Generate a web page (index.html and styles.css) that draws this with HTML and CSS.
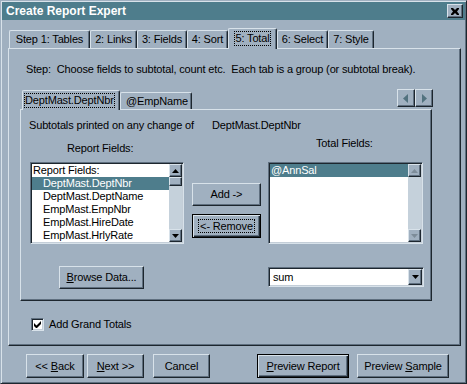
FILE: index.html
```html
<!DOCTYPE html>
<html>
<head>
<meta charset="utf-8">
<link rel="stylesheet" href="styles.css">
</head>
<body>
<div class="window">
  <div class="titlebar">
    <span class="title">Create Report Expert</span>
    <span class="close raised"><svg width="8" height="7" viewBox="0 0 8 7"><path d="M0 0h2l2 2 2-2h2v1l-2 2.5 2 2.5v1h-2l-2-2-2 2h-2v-1l2-2.5-2-2.5z" fill="#000"/></svg></span>
  </div>
  <div class="content">
    <div class="tabs">
      <div class="tab t1">Step 1: Tables</div>
      <div class="tab t2">2: Links</div>
      <div class="tab t3">3: Fields</div>
      <div class="tab t4">4: Sort</div>
      <div class="tab t5 active"><span class="focus">5: Total</span></div>
      <div class="tab t6">6: Select</div>
      <div class="tab t7">7: Style</div>
    </div>
    <div class="panel">
      <div class="step">Step:&nbsp; Choose fields to subtotal, count etc.&nbsp; Each tab is a group (or subtotal break).</div>
      <div class="itabs-row">
        <div class="itabs">
          <div class="itab active"><span class="focus">DeptMast.DeptNbr</span></div>
          <div class="itab">@EmpName</div>
        </div>
        <div class="spin">
          <span class="spinbtn raised"><svg width="6" height="9" viewBox="0 0 6 9"><path d="M5 0v9L0 4.5z" fill="#52727f"/></svg></span>
          <span class="spinbtn raised"><svg width="6" height="9" viewBox="0 0 6 9"><path d="M1 0v9l5-4.5z" fill="#52727f"/></svg></span>
        </div>
      </div>
      <div class="ipanel">
        <div class="subline"><span class="subtext">Subtotals printed on any change of</span><span>DeptMast.DeptNbr</span></div>
        <div class="fields">
          <div class="lbl lbl-left">Report Fields:</div>
          <div></div>
          <div class="lbl lbl-right">Total Fields:</div>

          <div class="listbox">
            <div class="items">
              <div class="item">Report Fields:</div>
              <div class="item sub selected">DeptMast.DeptNbr</div>
              <div class="item sub">DeptMast.DeptName</div>
              <div class="item sub">EmpMast.EmpNbr</div>
              <div class="item sub">EmpMast.HireDate</div>
              <div class="item sub">EmpMast.HrlyRate</div>
            </div>
            <div class="scroll">
              <span class="sbtn raised"><svg width="7" height="4" viewBox="0 0 7 4"><path d="M3.5 0L7 4H0z" fill="#000"/></svg></span>
              <span class="thumb raised"></span>
              <span class="track"></span>
              <span class="sbtn raised"><svg width="7" height="4" viewBox="0 0 7 4"><path d="M0 0h7L3.5 4z" fill="#000"/></svg></span>
            </div>
          </div>

          <div class="mid">
            <span class="btn add"><span>Add -&gt;</span></span>
            <span class="btn default remove"><span class="focus">&lt;- Remove</span></span>
          </div>

          <div class="listbox right">
            <div class="items">
              <div class="item selected">@AnnSal</div>
            </div>
            <div class="scroll">
              <span class="sbtn raised"><svg width="7" height="4" viewBox="0 0 7 4"><path d="M3.5 0L7 4H0z" fill="#7d8c99"/></svg></span>
              <span class="track"></span>
              <span class="sbtn raised"><svg width="7" height="4" viewBox="0 0 7 4"><path d="M0 0h7L3.5 4z" fill="#7d8c99"/></svg></span>
            </div>
          </div>

          <div class="browse-cell"><span class="btn browse"><span><u>B</u>rowse Data...</span></span></div>
          <div></div>
          <div class="combo">
            <span class="combo-text">sum</span>
            <span class="sbtn raised combo-btn"><svg width="7" height="4" viewBox="0 0 7 4"><path d="M0 0h7L3.5 4z" fill="#000"/></svg></span>
          </div>
        </div>
      </div>
      <div class="check">
        <span class="box"><svg width="7" height="7" viewBox="0 0 7 7"><path d="M0 2v3l2 2h1l4-4V0L2.5 4.5z" fill="#000"/></svg></span>
        <span>Add Grand Totals</span>
      </div>
    </div>
    <div class="footer">
      <span class="btn fb back"><span>&lt;&lt; <u>B</u>ack</span></span>
      <span class="btn fb next"><span><u>N</u>ext &gt;&gt;</span></span>
      <span class="btn fb cancel"><span>Cancel</span></span>
      <span class="btn fb default preview"><span><u>P</u>review Report</span></span>
      <span class="btn fb sample"><span>Preview <u>S</u>ample</span></span>
    </div>
  </div>
</div>
</body>
</html>
```

FILE: styles.css
```css
:root {
  --face: #a0b0c0;
  --hi: #d8e2ea;
  --sh: #5f6f7f;
  --dk: #1d262e;
  --sel: #4e7d8c;
  --track: #c5d1db;
}

* { box-sizing: border-box; }

html, body {
  margin: 0;
  padding: 0;
  background: var(--face);
}

body {
  font-family: "Liberation Sans", Arial, sans-serif;
  font-size: 11px;
  line-height: 13px;
  letter-spacing: -0.15px;
  color: #000;
}

.window {
  width: 467px;
  height: 384px;
  background: var(--face);
  border: 1px solid;
  border-color: var(--face) var(--dk) var(--dk) var(--face);
  padding: 1px;
  box-shadow: inset 1px 1px 0 var(--hi), inset -1px -1px 0 var(--sh);
}

.titlebar {
  height: 18px;
  background: var(--sel);
  display: flex;
  align-items: center;
  justify-content: space-between;
  padding: 0 2px 0 4px;
}

.title {
  color: #fff;
  font-weight: bold;
  font-size: 12px;
  letter-spacing: 0;
}

.raised {
  border: 1px solid;
  border-color: var(--hi) var(--dk) var(--dk) var(--hi);
  box-shadow: inset -1px -1px 0 var(--sh);
  background: var(--face);
}

.close {
  width: 16px;
  height: 14px;
  display: flex;
  align-items: center;
  justify-content: center;
}

.content {
  padding: 8px 4px 0 6px;
}

.tabs {
  display: flex;
  align-items: flex-end;
  height: 20px;
  padding-left: 1px;
  position: relative;
  z-index: 1;
}

.tab {
  height: 18px;
  display: flex;
  align-items: center;
  justify-content: center;
  border-top: 1px solid var(--hi);
  border-left: 1px solid var(--hi);
  border-right: 1px solid var(--dk);
  box-shadow: inset -1px 0 0 var(--sh);
  border-radius: 2px 2px 0 0;
  background: var(--face);
  white-space: nowrap;
}

.tab.active {
  height: 21px;
  margin-bottom: -1px;
  padding-bottom: 1px;
}

.t1 { width: 81px; }
.t2 { width: 47px; }
.t3 { width: 50px; }
.t4 { width: 41px; }
.t5 { width: 49px; }
.t6 { width: 51px; }
.t7 { width: 46px; }

.focus {
  outline: 1px dotted #000;
  outline-offset: 0;
}

.panel {
  border: 1px solid;
  border-color: var(--hi) var(--dk) var(--dk) var(--hi);
  box-shadow: inset -1px -1px 0 var(--sh);
  padding: 14px 0 14px 11px;
}

.step {
  margin-left: 6px;
  white-space: nowrap;
}

.itabs-row {
  width: 412px;
  display: flex;
  justify-content: space-between;
  align-items: flex-end;
  margin-top: 14px;
  height: 19px;
  position: relative;
  z-index: 1;
}

.itabs {
  display: flex;
  align-items: flex-end;
  padding-left: 2px;
}

.itab {
  height: 17px;
  display: flex;
  align-items: center;
  padding: 0 5px;
  border-top: 1px solid var(--hi);
  border-left: 1px solid var(--hi);
  border-right: 1px solid var(--dk);
  box-shadow: inset -1px 0 0 var(--sh);
  border-radius: 2px 2px 0 0;
  background: var(--face);
  white-space: nowrap;
}

.itab.active {
  height: 20px;
  width: 98px;
  margin-bottom: -1px;
  padding: 0 1px 1px 2px;
}

.itab:not(.active) { width: 72px; }

.spin {
  display: flex;
  align-self: flex-start;
  margin-top: -1px;
  margin-right: -1px;
}

.spinbtn {
  width: 18px;
  height: 18px;
  display: flex;
  align-items: center;
  justify-content: center;
}

.ipanel {
  width: 412px;
  border: 1px solid;
  border-color: var(--hi) var(--dk) var(--dk) var(--hi);
  box-shadow: inset -1px -1px 0 var(--sh);
  padding: 9px 0 11px 0;
}

.subline {
  display: flex;
  padding-left: 8px;
  height: 13px;
  white-space: nowrap;
}

.subtext { width: 183px; }

.fields {
  display: grid;
  grid-template-columns: 154px 68px 155px;
  grid-template-rows: 30px 82px auto;
  column-gap: 8px;
  margin-left: 9px;
}

.fields > :nth-child(3n+2) { margin-right: -1px; }

.lbl { white-space: nowrap; }
.lbl-left { margin: 10px 0 0 37px; }
.lbl-right { margin: 5px 0 0 48px; }

.listbox {
  display: flex;
  background: #fff;
  border: 1px solid;
  border-color: var(--sh) var(--hi) var(--hi) var(--sh);
  box-shadow: inset 1px 1px 0 var(--dk), inset -1px -1px 0 #c4ced8;
  padding: 1px;
  height: 82px;
}

.items {
  flex: 1;
  overflow: hidden;
}

.item {
  height: 13px;
  line-height: 13px;
  padding-left: 1px;
  white-space: nowrap;
}

.item.sub { padding-left: 11px; }

.item.selected {
  background: var(--sel);
  color: #fff;
}

.scroll {
  width: 13px;
  display: flex;
  flex-direction: column;
  background: var(--track);
}

.sbtn {
  width: 13px;
  height: 13px;
  display: flex;
  align-items: center;
  justify-content: center;
  flex: none;
}

.thumb {
  height: 9px;
  flex: none;
}

.track { flex: 1; }

.mid {
  display: flex;
  flex-direction: column;
  padding-top: 21px;
  gap: 8px;
}

.btn {
  display: flex;
  align-items: center;
  justify-content: center;
  background: var(--face);
  border: 1px solid;
  border-color: var(--hi) var(--dk) var(--dk) var(--hi);
  box-shadow: inset -1px -1px 0 var(--sh);
  white-space: nowrap;
}

.btn.default {
  border-color: #000;
  box-shadow: inset 1px 1px 0 var(--hi), inset -1px -1px 0 var(--dk), inset -2px -2px 0 var(--sh);
}

.add { height: 23px; }
.remove { height: 24px; }
.remove .focus { padding: 0 1px; line-height: 12px; }

.browse-cell { padding-top: 22px; }

.browse {
  width: 85px;
  height: 23px;
  margin-left: 29px;
}

.combo {
  margin-top: 23px;
  width: 156px;
  height: 20px;
  display: flex;
  align-items: center;
  background: #fff;
  border: 1px solid;
  border-color: var(--sh) var(--hi) var(--hi) var(--sh);
  box-shadow: inset 1px 1px 0 var(--dk), inset -1px -1px 0 #c4ced8;
  padding: 1px;
}

.combo-text {
  flex: 1;
  padding-left: 3px;
}

.combo-btn {
  height: 16px;
  width: 14px;
}

.check {
  display: flex;
  align-items: center;
  gap: 5px;
  margin: 17px 0 0 11px;
  height: 13px;
}

.box {
  width: 13px;
  height: 13px;
  background: #fff;
  border: 1px solid;
  border-color: var(--sh) var(--hi) var(--hi) var(--sh);
  box-shadow: inset 1px 1px 0 var(--dk), inset -1px -1px 0 #c4ced8;
  display: flex;
  align-items: center;
  justify-content: center;
}

.footer {
  display: flex;
  margin-top: 8px;
  padding-left: 18px;
}

.fb { height: 24px; }
.back { width: 58px; }
.next { width: 57px; margin-left: 3px; }
.cancel { width: 57px; margin-left: 9px; }
.preview { width: 92px; margin-left: 47px; }
.sample { width: 92px; margin-left: 8px; }
```
